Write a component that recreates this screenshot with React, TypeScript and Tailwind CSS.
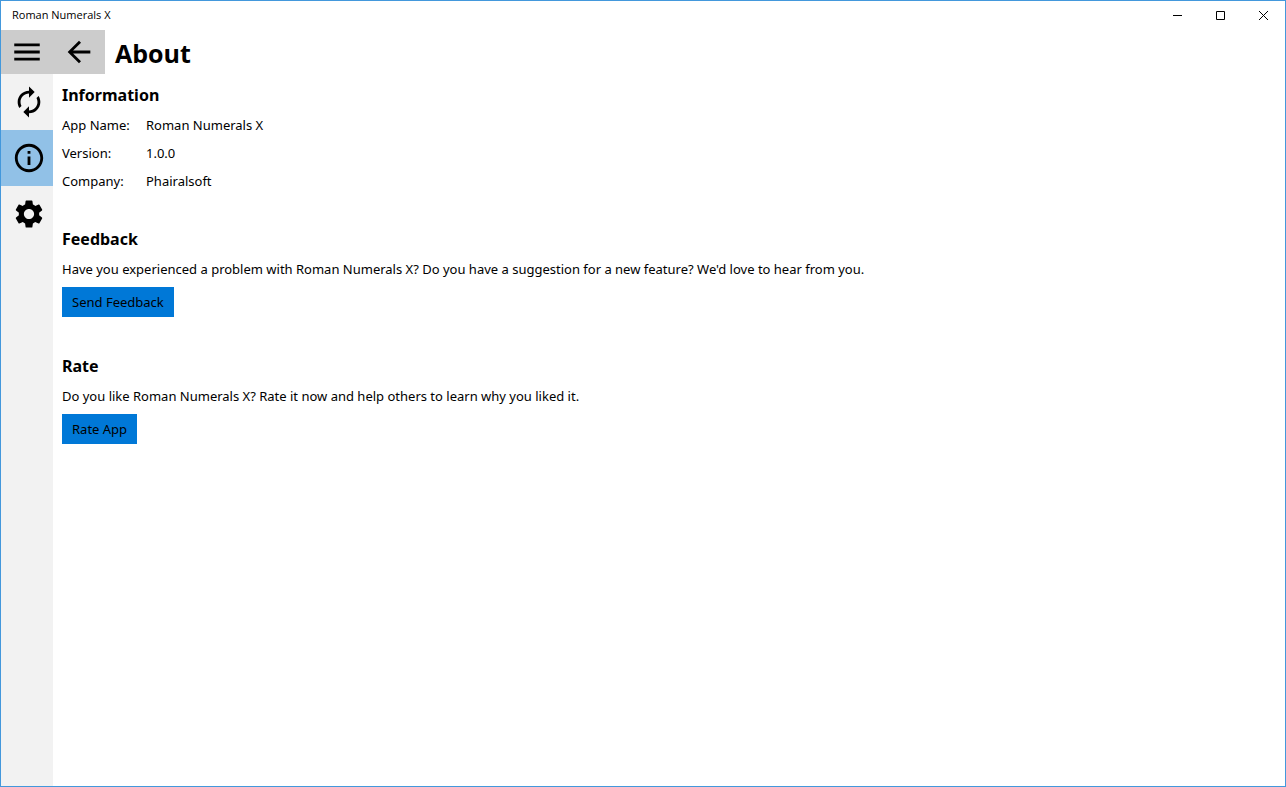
import type { ReactNode } from "react";
import {
  MdArrowBack,
  MdAutorenew,
  MdInfoOutline,
  MdMenu,
  MdSettings,
} from "react-icons/md";

const info = [
  { label: "App Name:", value: "Roman Numerals X" },
  { label: "Version:", value: "1.0.0" },
  { label: "Company:", value: "Phairalsoft" },
];

const navItems = [
  { label: "Convert", icon: MdAutorenew, active: false },
  { label: "About", icon: MdInfoOutline, active: true },
  { label: "Settings", icon: MdSettings, active: false },
];

function CaptionButton({ label, children }: { label: string; children: ReactNode }) {
  return (
    <button
      type="button"
      aria-label={label}
      className="flex w-[43px] items-center justify-center hover:bg-gray-200"
    >
      <svg width="11" height="11" viewBox="0 0 11 11" fill="none" stroke="#000">
        {children}
      </svg>
    </button>
  );
}

function TitleBar() {
  return (
    <div className="flex h-[29px] justify-between">
      <span className="pl-[11px] text-[11px] leading-[28px]">Roman Numerals X</span>
      <div className="flex">
        <CaptionButton label="Minimize">
          <path d="M1 5.5h9" />
        </CaptionButton>
        <CaptionButton label="Maximize">
          <path d="M1.5 1.5h8v8h-8z" />
        </CaptionButton>
        <CaptionButton label="Close">
          <path d="M1 1l9 9M10 1l-9 9" />
        </CaptionButton>
      </div>
    </div>
  );
}

function Section({ title, children }: { title: string; children: ReactNode }) {
  return (
    <section className="flex flex-col items-start">
      <h2 className="mb-1 text-[16px] leading-6 font-bold">{title}</h2>
      {children}
    </section>
  );
}

function ActionButton({ label }: { label: string }) {
  return (
    <button
      type="button"
      className="mt-1 mb-[6px] h-[30px] bg-[#0078d7] px-[10px] pt-[2px] hover:bg-[#1a86db]"
    >
      {label}
    </button>
  );
}

export default function App() {
  return (
    <div className="flex min-h-screen flex-col border border-[#4398dc] bg-white font-['Open_Sans','Noto_Sans',sans-serif] text-[13px] text-black">
      <TitleBar />

      <header className="flex h-[44px] items-center">
        <div className="flex h-full bg-[#cccccc]">
          <button type="button" aria-label="Menu" className="flex w-[52px] items-center justify-center">
            <MdMenu size={34} />
          </button>
          <button type="button" aria-label="Back" className="flex w-[52px] items-center justify-center">
            <MdArrowBack size={34} />
          </button>
        </div>
        <h1 className="pt-[2px] pl-[10px] text-[25px] leading-8 font-bold">About</h1>
      </header>

      <div className="flex flex-1">
        <nav className="w-[52px] shrink-0 bg-[#f2f2f2]">
          {navItems.map(({ label, icon: Icon, active }) => (
            <button
              key={label}
              type="button"
              aria-label={label}
              aria-current={active ? "page" : undefined}
              className={`flex h-14 w-full items-center pb-px pl-[11px] ${active ? "bg-[#91c1e7]" : ""}`}
            >
              <Icon size={34} />
            </button>
          ))}
        </nav>

        <main className="flex flex-col gap-[31px] px-[9px] pt-[9px] font-['Noto_Sans',sans-serif]">
          <Section title="Information">
            <table className="mt-px">
              <tbody>
                {info.map((row) => (
                  <tr key={row.label} className="h-7">
                    <th scope="row" className="w-[84px] p-0 text-left font-normal">
                      {row.label}
                    </th>
                    <td className="p-0">{row.value}</td>
                  </tr>
                ))}
              </tbody>
            </table>
          </Section>

          <Section title="Feedback">
            <p className="leading-7">
              Have you experienced a problem with Roman Numerals X? Do you have a
              suggestion for a new feature? We'd love to hear from you.
            </p>
            <ActionButton label="Send Feedback" />
          </Section>

          <Section title="Rate">
            <p className="leading-7">
              Do you like Roman Numerals X? Rate it now and help others to learn
              why you liked it.
            </p>
            <ActionButton label="Rate App" />
          </Section>
        </main>
      </div>
    </div>
  );
}
